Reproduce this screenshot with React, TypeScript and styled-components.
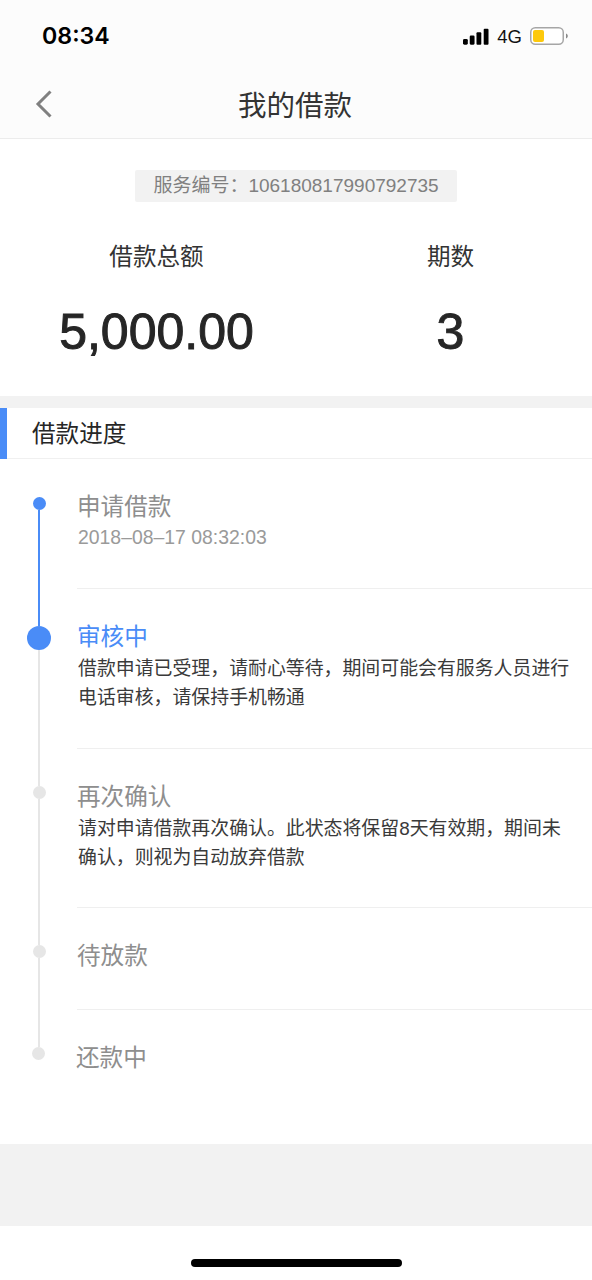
import React from "react";
import styled, { createGlobalStyle } from "styled-components";

const Global = createGlobalStyle`
  html, body { margin: 0; padding: 0; background: #fff; }
  * { box-sizing: border-box; }
  body { font-family: "Liberation Sans", "Noto Sans CJK SC", sans-serif; }
`;

const Page = styled.div`
  width: 592px;
  height: 1280px;
  display: flex;
  flex-direction: column;
  overflow: hidden;
  background: #fff;
`;

const Top = styled.header`
  height: 139px;
  flex: none;
  background: #fcfcfc;
  border-bottom: 1px solid #ececec;
`;

const StatusBar = styled.div`
  height: 72px;
  padding: 0 24px 0 42px;
  display: flex;
  align-items: center;
  justify-content: space-between;
`;

const Clock = styled.span`
  font-family: Inter, "Liberation Sans", sans-serif;
  font-size: 23.2px;
  font-weight: 600;
  color: #000;
`;

const StatusIcons = styled.div`
  display: flex;
  align-items: center;
`;

const Network = styled.span`
  font-size: 18.5px;
  color: #111;
  margin: 2px 8px 0 8px;
`;

const Nav = styled.div`
  height: 66px;
  padding: 0 0 2px 35px;
  display: grid;
  grid-template-columns: 39px 1fr 76px;
  align-items: center;
`;

const NavTitle = styled.h1`
  margin: 0;
  padding-bottom: 2px;
  text-align: center;
  font-size: 28.5px;
  font-weight: 400;
  color: #333;
`;

const Summary = styled.section`
  height: 257px;
  flex: none;
  padding-top: 31px;
  display: flex;
  flex-direction: column;
  align-items: center;
`;

const Serial = styled.div`
  width: 322px;
  height: 32px;
  padding-bottom: 6px;
  display: flex;
  align-items: center;
  justify-content: center;
  background: #f2f2f2;
  border-radius: 2px;
  font-size: 19px;
  color: #808080;
`;

const Figures = styled.div`
  width: 100%;
  padding-top: 34px;
  display: grid;
  grid-template-columns: 313px 275px;
`;

const Figure = styled.div`
  display: flex;
  flex-direction: column;
  align-items: center;
`;

const FigureLabel = styled.div`
  height: 42px;
  line-height: 42px;
  font-size: 23.6px;
  color: #333;
`;

const FigureValue = styled.div`
  margin-top: 25px;
  height: 58px;
  line-height: 58px;
  font-size: 50px;
  color: #262626;
  -webkit-text-stroke: 1px #262626;
`;

const Band = styled.div<{ $height: number }>`
  height: ${(p) => p.$height}px;
  flex: none;
  background: #f2f2f2;
`;

const SectionHead = styled.div`
  height: 51px;
  flex: none;
  padding: 0 0 4px 25px;
  display: flex;
  align-items: center;
  font-size: 23.6px;
  color: #262626;
  border-left: 7px solid #4a8cf7;
  position: relative;
  &::after {
    content: "";
    position: absolute;
    left: 0;
    right: 0;
    bottom: 0;
    height: 1px;
    background: #f0f0f0;
  }
`;

const Steps = styled.div`
  flex: 1;
  display: flex;
  flex-direction: column;
`;

const Step = styled.div<{ $height: number }>`
  height: ${(p) => p.$height}px;
  flex: none;
  display: grid;
  grid-template-columns: 78px 1fr;
`;

const Rail = styled.div`
  display: flex;
  flex-direction: column;
  align-items: center;
`;

const Segment = styled.div<{ $color: string; $height?: number }>`
  width: 2px;
  background: ${(p) => p.$color};
  ${(p) => (p.$height !== undefined ? `height: ${p.$height}px; flex: none;` : "flex: 1;")}
`;

const Dot = styled.div<{ $size: number; $color: string; $shift: number }>`
  width: ${(p) => p.$size}px;
  height: ${(p) => p.$size}px;
  flex: none;
  margin-left: ${(p) => p.$shift * 2}px;
  border-radius: 50%;
  background: ${(p) => p.$color};
`;

const StepBody = styled.div<{ $divider: boolean; $shift: number }>`
  padding-top: 31px;
  margin-left: ${(p) => p.$shift - 1}px;
  border-bottom: ${(p) => (p.$divider ? "1px solid #efefef" : "none")};
`;

const StepTitle = styled.div<{ $active?: boolean }>`
  height: 34px;
  line-height: 34px;
  font-size: 23.6px;
  color: ${(p) => (p.$active ? "#4a8cf7" : "#8e8e8e")};
`;

const StepDate = styled.div`
  height: 27px;
  padding-left: 1px;
  line-height: 27px;
  font-size: 19.4px;
  color: #9a9a9a;
`;

const StepText = styled.div`
  padding-left: 1px;
  font-size: 18.9px;
  line-height: 29px;
  color: #3a3a3a;
`;

const HomeArea = styled.div`
  height: 54px;
  flex: none;
  display: flex;
  justify-content: center;
  padding-top: 33px;
`;

const HomeBar = styled.div`
  width: 211px;
  height: 8px;
  border-radius: 4px;
  background: #000;
`;

const BLUE = "#4a8cf7";
const GRAY = "#e6e6e6";

type StepData = {
  title: string;
  height: number;
  size: number;
  dot: string;
  before: string;
  beforeH: number;
  after: string;
  date?: string;
  text?: string[];
  active?: boolean;
  divider: boolean;
  shift?: number;
};

const steps: StepData[] = [
  { title: "申请借款", height: 130, size: 13, dot: BLUE, before: "transparent", beforeH: 38, after: BLUE, date: "2018\u201308\u201317 08:32:03", divider: true },
  {
    title: "审核中", height: 160, size: 24, dot: BLUE, before: BLUE, beforeH: 37, after: GRAY, active: true, divider: true,
    text: ["借款申请已受理\uFF0C请耐心等待\uFF0C期间可能会有服务人员进行", "电话审核\uFF0C请保持手机畅通"],
  },
  {
    title: "再次确认", height: 159, size: 13, dot: GRAY, before: GRAY, beforeH: 37, after: GRAY, divider: true,
    text: ["请对申请借款再次确认。此状态将保留8天有效期\uFF0C期间未", "确认\uFF0C则视为自动放弃借款"],
  },
  { title: "待放款", height: 102, size: 13, dot: GRAY, before: GRAY, beforeH: 37, after: GRAY, divider: true },
  { title: "还款中", height: 134, size: 13, dot: GRAY, before: GRAY, beforeH: 37, after: "transparent", divider: false, shift: -1 },
];

export default function App() {
  return (
    <Page>
      <Global />
      <Top>
        <StatusBar>
          <Clock>08:34</Clock>
          <StatusIcons>
            <svg width="26" height="17" viewBox="0 0 27 17" aria-hidden="true">
              <rect x="0" y="11" width="5" height="6" rx="1.5" fill="#000" />
              <rect x="7" y="7.5" width="5" height="9.5" rx="1.2" fill="#000" />
              <rect x="14" y="4" width="5" height="13" rx="1" fill="#000" />
              <rect x="21.5" y="0.5" width="5" height="16.5" rx="1" fill="#000" />
            </svg>
            <Network>4G</Network>
            <svg width="38" height="18" viewBox="0 0 38 18" aria-hidden="true">
              <rect x="0.75" y="0.75" width="32.5" height="16.5" rx="4.5" fill="#fff" stroke="#a6a6a6" strokeWidth="1.5" />
              <rect x="3" y="3" width="11" height="12" rx="2" fill="#fdc90c" />
              <path d="M36 6.5c1.2.4 1.8 1.4 1.8 2.5s-.6 2.1-1.8 2.5z" fill="#8a8a8a" />
            </svg>
          </StatusIcons>
        </StatusBar>
        <Nav>
          <svg width="18" height="28" viewBox="0 0 18 28" aria-hidden="true">
            <path d="M15.5 1.5 3 14l12.5 12.5" fill="none" stroke="#808080" strokeWidth="3" />
          </svg>
          <NavTitle>我的借款</NavTitle>
          <span />
        </Nav>
      </Top>
      <Summary>
        <Serial>{"服务编号\uFF1A106180817990792735"}</Serial>
        <Figures>
          <Figure>
            <FigureLabel>借款总额</FigureLabel>
            <FigureValue>5,000.00</FigureValue>
          </Figure>
          <Figure>
            <FigureLabel>期数</FigureLabel>
            <FigureValue>3</FigureValue>
          </Figure>
        </Figures>
      </Summary>
      <Band $height={12} />
      <SectionHead>借款进度</SectionHead>
      <Steps>
        {steps.map((s) => (
          <Step key={s.title} $height={s.height}>
            <Rail>
              <Segment $color={s.before} $height={s.beforeH} />
              <Dot $size={s.size} $color={s.dot} $shift={s.shift ?? 0} />
              <Segment $color={s.after} />
            </Rail>
            <StepBody $divider={s.divider} $shift={s.shift ?? 0}>
              <StepTitle $active={s.active}>{s.title}</StepTitle>
              {s.date && <StepDate>{s.date}</StepDate>}
              {s.text && (
                <StepText>
                  {s.text.map((line) => (
                    <div key={line}>{line}</div>
                  ))}
                </StepText>
              )}
            </StepBody>
          </Step>
        ))}
      </Steps>
      <Band $height={82} />
      <HomeArea>
        <HomeBar />
      </HomeArea>
    </Page>
  );
}
